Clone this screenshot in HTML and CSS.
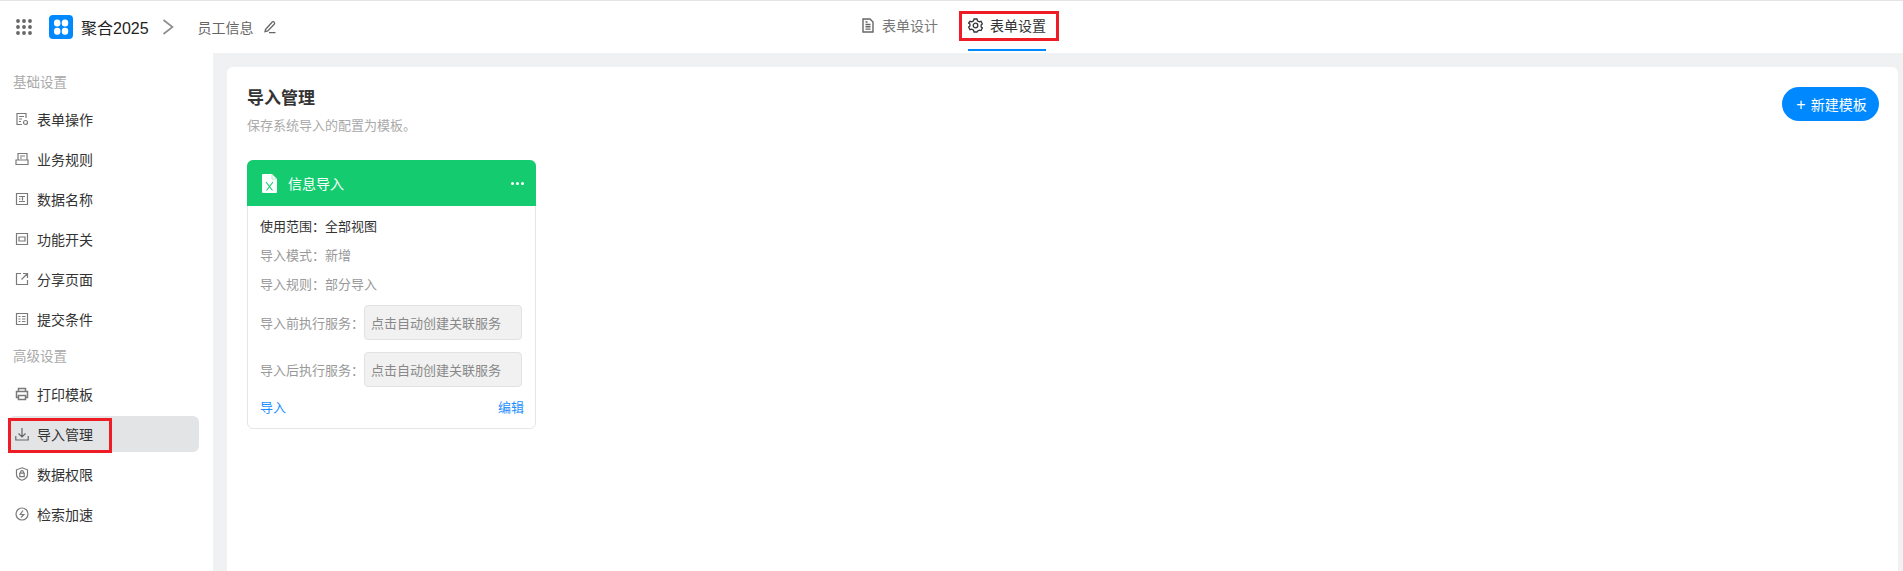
FILE: index.html
```html
<!DOCTYPE html>
<html lang="zh-CN">
<head>
    <meta charset="UTF-8">
    <title>导入管理</title>
    <link rel="stylesheet" href="styles.css">
</head>
<body>
    <header class="topbar">
        <div class="topbar-left">
            <svg class="apps" width="16" height="16" viewBox="0 0 16 16" fill="#666">
                <circle cx="2" cy="2" r="1.9"/><circle cx="8" cy="2" r="1.9"/><circle cx="14" cy="2" r="1.9"/>
                <circle cx="2" cy="8" r="1.9"/><circle cx="8" cy="8" r="1.9"/><circle cx="14" cy="8" r="1.9"/>
                <circle cx="2" cy="14" r="1.9"/><circle cx="8" cy="14" r="1.9"/><circle cx="14" cy="14" r="1.9"/>
            </svg>
            <svg class="logo" width="24" height="24" viewBox="0 0 24 24">
                <rect width="24" height="24" rx="4" fill="#0089ff"/>
                <g fill="#fff">
                    <rect x="5" y="4.5" width="6.4" height="7" rx="3"/><rect x="12.8" y="4.5" width="6.4" height="7" rx="3"/>
                    <rect x="5" y="12.8" width="6.4" height="7" rx="3"/><rect x="12.8" y="12.8" width="6.4" height="7" rx="3"/>
                </g>
            </svg>
            <span class="app-name">聚合2025</span>
            <svg class="chevron" width="12" height="16" viewBox="0 0 12 16" fill="none" stroke="#8c8c8c" stroke-width="1.6"><path d="M1.5 1l9 7-9 7"/></svg>
            <span class="form-name">员工信息</span>
            <svg class="pen" width="14" height="14" viewBox="0 0 14 14" fill="none" stroke="#666" stroke-width="1.3"><path d="M2.5 9.500L9 2.200c.7-.7 1.600-.7 2.200-.1s.6 1.500 0 2.100L4.800 11 2 11.600zM6 12.600h6.500"/></svg>
        </div>
        <nav class="tabs">
            <a class="tab">
                <svg width="14" height="15" viewBox="0 0 14 15" fill="none" stroke="#666" stroke-width="1.400"><path d="M2 1h7l3 3v10H2zM4.500 6.500h5M4.500 8.800h5M4.500 11.100h5M4.500 4h2"/></svg>
                表单设计
            </a>
            <a class="tab tab-active">
                <svg width="15" height="15" viewBox="0 0 15 15" fill="none" stroke="#333" stroke-width="1.300"><path d="M6 1h3l.5 1.800 1.700 1 1.800-.5 1.400 2.700-1.300 1 0 1.900 1.300 1-1.400 2.700-1.800-.5-1.700 1L9 14H6l-.5-1.800-1.700-1-1.800.5L.6 9l1.300-1 0-1.900-1.300-1L2 3.300l1.800.5 1.700-1z"/><circle cx="7.500" cy="7.500" r="2.300"/></svg>
                表单设置
            </a>
        </nav>
        <div class="mark mark-tab"></div>
    </header>

    <div class="main">
        <aside class="sidebar">
            <div class="side-title">基础设置</div>
            <a class="side-item">
                <svg width="14" height="14" viewBox="0 0 14 14" fill="none" stroke="#7a7a7a" stroke-width="1.200"><path d="M11 6V1.500H2v11h5M4 4.500h5M4 7h3M4 9.500h2"/><circle cx="10.500" cy="10.500" r="2"/></svg>
                表单操作
            </a>
            <a class="side-item">
                <svg width="14" height="14" viewBox="0 0 14 14" fill="none" stroke="#7a7a7a" stroke-width="1.200"><path d="M3 8V1.500h9V8M1 8h12v4.500H1zM5 4h5M5 6h2"/></svg>
                业务规则
            </a>
            <a class="side-item">
                <svg width="14" height="14" viewBox="0 0 14 14" fill="none" stroke="#7a7a7a" stroke-width="1.200"><path d="M1.500 1.500h11v11h-11zM4 4.500h6M7.500 4.500v4M4 9.500h6M4 7h1.500"/></svg>
                数据名称
            </a>
            <a class="side-item">
                <svg width="14" height="14" viewBox="0 0 14 14" fill="none" stroke="#7a7a7a" stroke-width="1.200"><path d="M1.500 1.500h11v11h-11zM4 5h6v4H4z"/></svg>
                功能开关
            </a>
            <a class="side-item">
                <svg width="14" height="14" viewBox="0 0 14 14" fill="none" stroke="#7a7a7a" stroke-width="1.200"><path d="M6 1.500H1.500v11h11V8M8 1.500h4.500V6M12.500 1.500L6.500 7.500"/></svg>
                分享页面
            </a>
            <a class="side-item">
                <svg width="14" height="14" viewBox="0 0 14 14" fill="none" stroke="#7a7a7a" stroke-width="1.200"><path d="M1.500 1.500h11v11h-11zM3.500 4.500h2M7 4.500h3.500M3.500 7h2M7 7h3.500M3.500 9.500h2M7 9.500h3.500"/></svg>
                提交条件
            </a>
            <div class="side-title side-title-2">高级设置</div>
            <a class="side-item">
                <svg width="14" height="14" viewBox="0 0 14 14" fill="none" stroke="#7a7a7a" stroke-width="1.500"><path d="M3.500 4V1.500h7V4M3.500 10.500H1.500V4.500h11v6h-2M3.500 8.500h7v4h-7z"/></svg>
                打印模板
            </a>
            <a class="side-item side-active">
                <svg width="14" height="14" viewBox="0 0 14 14" fill="none" stroke="#666" stroke-width="1.200"><path d="M7 1v8.500M3.500 6.500L7 10l3.500-3.500M.8 9v4h12.400V9"/></svg>
                导入管理
                <div class="mark mark-side"></div>
            </a>
            <a class="side-item">
                <svg width="14" height="14" viewBox="0 0 14 14" fill="none" stroke="#7a7a7a" stroke-width="1.200"><path d="M7 .8l5.500 2v4.700c0 2.800-2.500 4.700-5.500 5.700-3-1-5.500-2.900-5.500-5.700V2.800z"/><path d="M4.800 6.200h4.400v3.500H4.800zM5.600 6.200V5a1.400 1.400 0 0 1 2.800 0v1.200"/></svg>
                数据权限
            </a>
            <a class="side-item">
                <svg width="14" height="14" viewBox="0 0 14 14" fill="none" stroke="#7a7a7a" stroke-width="1.200"><circle cx="7" cy="7" r="6"/><path d="M8 3.500L5.200 7.500h3.600L6 10.500"/></svg>
                检索加速
            </a>
        </aside>

        <div class="content">
            <section class="panel">
                <div class="panel-head">
                    <div>
                        <h1>导入管理</h1>
                        <p class="panel-desc">保存系统导入的配置为模板。</p>
                    </div>
                    <button class="btn-new"><span class="plus">+</span>新建模板</button>
                </div>

                <div class="tpl-card">
                    <div class="tpl-head">
                        <svg width="15" height="19" viewBox="0 0 15 19"><path d="M1 0h9l5 5v13a1 1 0 0 1-1 1H1a1 1 0 0 1-1-1V1a1 1 0 0 1 1-1z" fill="#fff"/><path d="M10 .5v4.500h4.500" fill="none" stroke="#8fe6b8" stroke-width=".8"/><path d="M4 8l6.500 8.500M11 8l-6.500 8.500" stroke="#14cc6f" stroke-width="1.100"/></svg>
                        <span class="tpl-name">信息导入</span>
                        <span class="tpl-more"><i></i><i></i><i></i></span>
                    </div>
                    <div class="tpl-body">
                        <div class="tpl-row tpl-dark">使用范围：全部视图</div>
                        <div class="tpl-row">导入模式：新增</div>
                        <div class="tpl-row">导入规则：部分导入</div>
                        <div class="tpl-field">
                            <span class="field-label">导入前执行服务：</span>
                            <span class="field-box">点击自动创建关联服务</span>
                        </div>
                        <div class="tpl-field">
                            <span class="field-label">导入后执行服务：</span>
                            <span class="field-box">点击自动创建关联服务</span>
                        </div>
                        <div class="tpl-foot">
                            <a>导入</a>
                            <a>编辑</a>
                        </div>
                    </div>
                </div>
            </section>
        </div>
    </div>
</body>
</html>
```

FILE: styles.css
```css
* {
    box-sizing: border-box;
}

html, body {
    height: 100%;
}

body {
    margin: 0;
    overflow: hidden;
    background-color: #f0f1f3;
    color: #333;
    font-family: "Liberation Sans", "Noto Sans CJK SC", sans-serif;
    font-size: 14px;
}

a {
    color: inherit;
}

/* top bar */
.topbar {
    position: relative;
    display: flex;
    align-items: center;
    height: 53px;
    border-top: 1px solid #e4e4e4;
    background-color: #fff;
}

.topbar-left {
    display: flex;
    align-items: center;
    padding-left: 16px;
}

.logo {
    margin-left: 17px;
}

.app-name {
    margin-left: 8px;
    color: #222;
    font-size: 16px;
}

.chevron {
    margin-left: 13px;
}

.form-name {
    margin-left: 24px;
    color: #666;
}

.pen {
    margin-left: 9px;
}

.tabs {
    position: absolute;
    top: 0;
    left: 861px;
    display: flex;
    gap: 30px;
    height: 52px;
}

.tab {
    display: flex;
    align-items: center;
    gap: 7px;
    height: 50px;
    padding-bottom: 2px;
    color: #777;
}

.tab-active {
    border-bottom: 2px solid #0089ff;
    color: #333;
    padding: 0;
}

/* the red outlines sit on top of the page */
.mark {
    position: absolute;
    border: 3px solid #ee1c25;
}

.mark-tab {
    top: 10px;
    left: 959px;
    width: 100px;
    height: 30px;
}

.mark-side {
    top: 2px;
    left: 0;
    width: 104px;
    height: 35px;
}

/* layout */
.main {
    display: flex;
    height: 518px;
}

.sidebar {
    flex: 0 0 213px;
    padding: 0 14px 0 8px;
    background-color: #fff;
}

.side-title {
    height: 48px;
    padding: 20px 0 0 5px;
    color: #aaa;
    font-size: 13.500px;
    line-height: 20px;
}

.side-title-2 {
    height: 35px;
    padding-top: 6px;
}

.side-item {
    position: relative;
    display: flex;
    align-items: center;
    gap: 8px;
    height: 36px;
    margin-bottom: 4px;
    padding: 0 0 1px 7px;
    border-radius: 6px;
    color: #333;
}

.side-active {
    background-color: #e3e4e6;
}

.content {
    flex: 1;
    padding: 14px 5px 0 14px;
}

/* panel */
.panel {
    height: 100%;
    padding: 20px 19px 0 20px;
    border-radius: 6px 6px 0 0;
    background-color: #fff;
}

.panel-head {
    display: flex;
    justify-content: space-between;
    height: 73px;
}

h1 {
    margin: 0;
    color: #333;
    font-size: 17px;
    font-weight: 700;
    line-height: 24px;
}

.panel-desc {
    margin: 5px 0 0;
    color: #aaa;
    font-size: 13px;
    line-height: 20px;
}

.btn-new {
    height: 34px;
    width: 97px;
    border: none;
    border-radius: 17px;
    background-color: #0089ff;
    color: #fff;
    font: inherit;
    padding: 0 0 0 2px;
}

.plus {
    margin-right: 5px;
    font-size: 16px;
}

/* template card */
.tpl-card {
    width: 289px;
    height: 269px;
    border: 1px solid #e6e6e6;
    border-radius: 6px;
}

.tpl-head {
    display: flex;
    align-items: center;
    height: 46px;
    margin: -1px -1px 0;
    padding: 0 12px 0 15px;
    border-radius: 6px 6px 0 0;
    background-color: #14cc6f;
    color: #fff;
}

.tpl-name {
    flex: 1;
    margin-left: 11px;
    font-size: 14px;
}

.tpl-more {
    display: flex;
    gap: 2px;
}

.tpl-more i {
    width: 3px;
    height: 3px;
    border-radius: 50%;
    background-color: #fff;
}

.tpl-body {
    padding: 9px 11px 0 12px;
    color: #999;
    font-size: 13px;
}

.tpl-row {
    height: 29px;
    line-height: 24px;
}

.tpl-dark {
    color: #333;
}

.tpl-field {
    display: flex;
    align-items: center;
    height: 35px;
    margin-bottom: 12px;
}

.tpl-row + .tpl-field {
    margin-top: 3px;
}

.field-box {
    display: flex;
    align-items: center;
    width: 158px;
    height: 35px;
    margin-left: auto;
    margin-right: 2px;
    padding-left: 6px;
    border: 1px solid #e2e2e2;
    border-radius: 4px;
    background-color: #f1f1f1;
    color: #888;
}

.tpl-foot {
    display: flex;
    justify-content: space-between;
    margin-top: -1px;
    color: #1f8fff;
    line-height: 20px;
}
```
